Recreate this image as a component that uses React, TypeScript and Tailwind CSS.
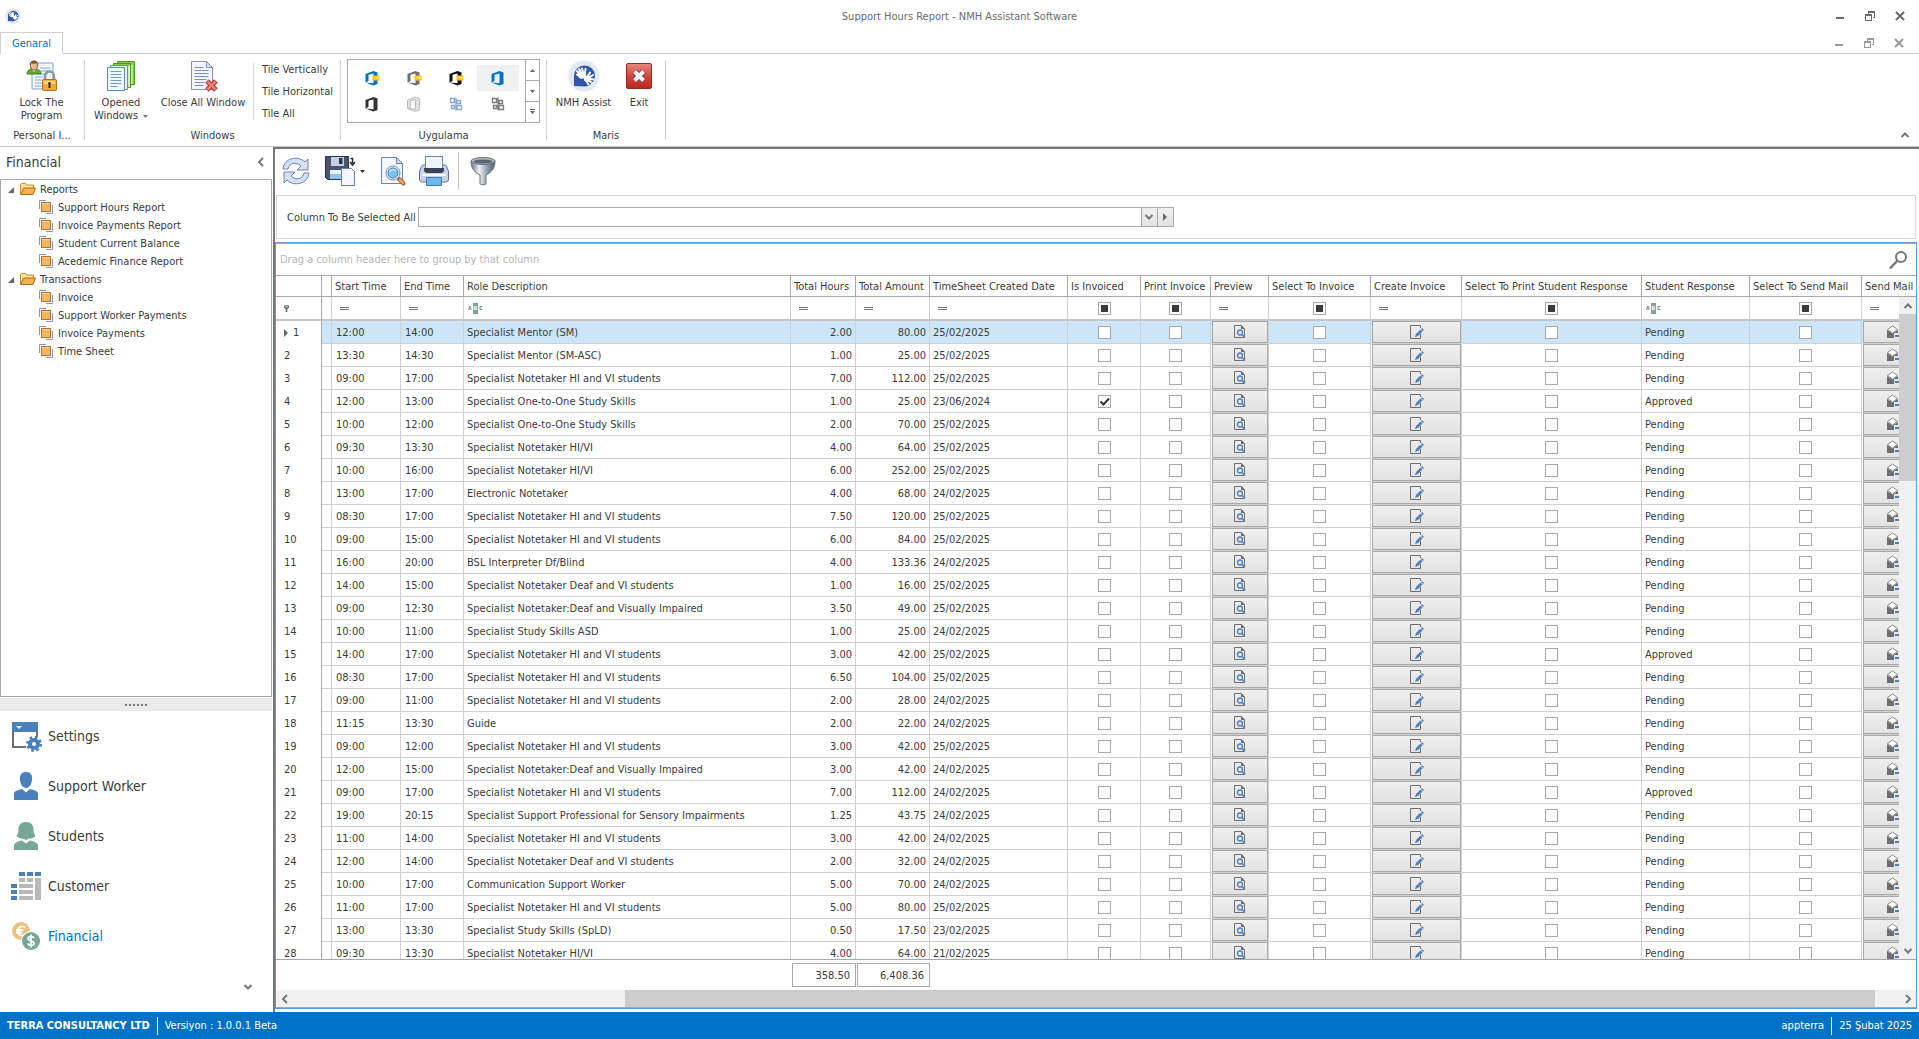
import { Fragment, type ReactNode } from 'react'

type Row = [string, string, string, string, string, string, string]

const N = 'Specialist Notetaker HI and VI students'

// start, end, role, hours, amount, created, response
const ROWS: Row[] = [
  ['12:00', '14:00', 'Specialist Mentor (SM)', '2.00', '80.00', '25/02/2025', 'Pending'],
  ['13:30', '14:30', 'Specialist Mentor (SM-ASC)', '1.00', '25.00', '25/02/2025', 'Pending'],
  ['09:00', '17:00', N, '7.00', '112.00', '25/02/2025', 'Pending'],
  ['12:00', '13:00', 'Specialist One-to-One Study Skills', '1.00', '25.00', '23/06/2024', 'Approved'],
  ['10:00', '12:00', 'Specialist One-to-One Study Skills', '2.00', '70.00', '25/02/2025', 'Pending'],
  ['09:30', '13:30', 'Specialist Notetaker HI/VI', '4.00', '64.00', '25/02/2025', 'Pending'],
  ['10:00', '16:00', 'Specialist Notetaker HI/VI', '6.00', '252.00', '25/02/2025', 'Pending'],
  ['13:00', '17:00', 'Electronic Notetaker', '4.00', '68.00', '24/02/2025', 'Pending'],
  ['08:30', '17:00', N, '7.50', '120.00', '25/02/2025', 'Pending'],
  ['09:00', '15:00', N, '6.00', '84.00', '25/02/2025', 'Pending'],
  ['16:00', '20:00', 'BSL Interpreter Df/Blind', '4.00', '133.36', '24/02/2025', 'Pending'],
  ['14:00', '15:00', 'Specialist Notetaker Deaf and VI students', '1.00', '16.00', '25/02/2025', 'Pending'],
  ['09:00', '12:30', 'Specialist Notetaker:Deaf and Visually Impaired', '3.50', '49.00', '25/02/2025', 'Pending'],
  ['10:00', '11:00', 'Specialist Study Skills ASD', '1.00', '25.00', '24/02/2025', 'Pending'],
  ['14:00', '17:00', N, '3.00', '42.00', '25/02/2025', 'Approved'],
  ['08:30', '17:00', N, '6.50', '104.00', '25/02/2025', 'Pending'],
  ['09:00', '11:00', N, '2.00', '28.00', '24/02/2025', 'Pending'],
  ['11:15', '13:30', 'Guide', '2.00', '22.00', '24/02/2025', 'Pending'],
  ['09:00', '12:00', N, '3.00', '42.00', '25/02/2025', 'Pending'],
  ['12:00', '15:00', 'Specialist Notetaker:Deaf and Visually Impaired', '3.00', '42.00', '24/02/2025', 'Pending'],
  ['09:00', '17:00', N, '7.00', '112.00', '24/02/2025', 'Approved'],
  ['19:00', '20:15', 'Specialist Support Professional for Sensory Impairments', '1.25', '43.75', '24/02/2025', 'Pending'],
  ['11:00', '14:00', N, '3.00', '42.00', '24/02/2025', 'Pending'],
  ['12:00', '14:00', 'Specialist Notetaker Deaf and VI students', '2.00', '32.00', '24/02/2025', 'Pending'],
  ['10:00', '17:00', 'Communication Support Worker', '5.00', '70.00', '24/02/2025', 'Pending'],
  ['11:00', '17:00', N, '5.00', '80.00', '25/02/2025', 'Pending'],
  ['13:00', '13:30', 'Specialist Study Skills (SpLD)', '0.50', '17.50', '23/02/2025', 'Pending'],
  ['09:30', '13:30', 'Specialist Notetaker HI/VI', '4.00', '64.00', '21/02/2025', 'Pending'],
]

const HEADERS = [
  'Start Time',
  'End Time',
  'Role Description',
  'Total Hours',
  'Total Amount',
  'TimeSheet Created Date',
  'Is Invoiced',
  'Print Invoice',
  'Preview',
  'Select To Invoice',
  'Create Invoice',
  'Select To Print Student Response',
  'Student Response',
  'Select To Send Mail',
  'Send Mail',
]

const FILTERS = ['eq', 'eq', 'abc', 'eq', 'eq', 'eq', 'box', 'box', 'eq', 'box', 'eq', 'box', 'abc', 'box', 'eq']

const TREE = [
  {
    title: 'Reports',
    items: ['Support Hours Report', 'Invoice Payments Report', 'Student Current Balance', 'Acedemic Finance Report'],
  },
  {
    title: 'Transactions',
    items: ['Invoice', 'Support Worker Payments', 'Invoice Payments', 'Time Sheet'],
  },
]

/* ---------- small glyphs ---------- */

function Chevron({ d, className = 'text-[#777]' }: { d: 'up' | 'down' | 'left' | 'right'; className?: string }) {
  const paths = {
    up: 'M1.500 7L5 3.500 8.500 7',
    down: 'M1.500 3L5 6.500 8.500 3',
    left: 'M7 1L3 5l4 4',
    right: 'M3 1l4 4-4 4',
  }
  return (
    <svg viewBox="0 0 10 10" className={`h-[10px] w-[10px] ${className}`} fill="none" stroke="currentColor" strokeWidth="2">
      <path d={paths[d]} />
    </svg>
  )
}

function RestoreGlyph() {
  return (
    <svg viewBox="0 0 10 10" className="h-[10px] w-[10px]" shapeRendering="crispEdges" fill="currentColor">
      <path d="M3 0h7v7H8V6h1V2H4v1H3z" />
      <path d="M0 3h7v7H0zM1 5v4h5V5z" fillRule="evenodd" />
    </svg>
  )
}

function WindowButtons({ className }: { className: string }) {
  return (
    <div className={`flex items-center ${className}`}>
      <button aria-label="Minimize" className="flex h-4 w-[30px] items-center justify-center">
        <svg viewBox="0 0 10 10" className="h-[10px] w-[10px]" fill="currentColor">
          <path d="M1 6h8v2H1z" />
        </svg>
      </button>
      <button aria-label="Restore" className="flex h-4 w-[30px] items-center justify-center">
        <RestoreGlyph />
      </button>
      <button aria-label="Close" className="flex h-4 w-[30px] items-center justify-center">
        <svg viewBox="0 0 10 10" className="h-[10px] w-[10px]" fill="none" stroke="currentColor" strokeWidth="2">
          <path d="M1 1l8 8M9 1L1 9" />
        </svg>
      </button>
    </div>
  )
}

function HandLogo({ className }: { className: string }) {
  return (
    <svg viewBox="0 0 32 32" className={className}>
      <circle cx="16" cy="16" r="15.5" fill="#e3e9ec" />
      <path d="M6 26V16a10.500 10.500 0 1 1 10.500 10.500z" fill="#2f56a8" />
      <g stroke="#fff" strokeLinecap="round" strokeWidth="2">
        <path d="M11.500 14L9 11M13 12.500L11 9M15 12l-1-3.500M17 13l.5-4M11 16l-2-1.500" />
        <path d="M20 16l2-3.500M22 17l3-2M22.500 19l3 .5M21.500 21l2.500 2M19 22l1.500 2.500" />
      </g>
      <path d="M10.500 16c0-3 3-5 6-3.500 1.500.5 2 2 1.500 3.500 2-1 4.500 0 5 2.500.3 3-2.500 4.500-5 3.500-2-1-2.500-2.500-2-4-2.500 1.500-5.500.5-5.500-2z" fill="#fff" />
    </svg>
  )
}

/* ---------- ribbon icons ---------- */

function LockIcon() {
  return (
    <svg viewBox="0 0 32 32" className="h-8 w-8">
      <path d="M6 3h21v26H6z" fill="#eef5fd" stroke="#7da3d3" />
      <path d="M14 8h10M14 11h10M14 14h8M9 17h8M9 20h7M9 23h7M9 26h7" stroke="#8fb0db" />
      <path d="M1 14c0-4 3-5 6.500-5s7.500 1 7.500 5z" fill="#66a832" stroke="#3f7c1c" />
      <path d="M6 9l2 3 2-3z" fill="#fff" />
      <ellipse cx="8" cy="5.500" rx="3.500" ry="4.500" fill="#e8b98b" stroke="#8a5a32" />
      <path d="M3.500 6c-.5-7 9-7 9 0l-1.500-3c-2 1-4 1-6 0z" fill="#7c4c25" />
      <path d="M19 20v-4c0-6 9-6 9 0v4" fill="none" stroke="#8e97a3" strokeWidth="2.500" />
      <rect x="16.500" y="19.500" width="14" height="11" rx="1" fill="#f6a93a" stroke="#b8701b" />
      <path d="M18 21h11v3H18z" fill="#fcd48a" />
      <path d="M23.500 22a1.500 1.500 0 0 1 1 2.500V28h-2v-3.500a1.500 1.500 0 0 1 1-2.500z" fill="#3a2a18" />
    </svg>
  )
}

function OpenedIcon() {
  return (
    <svg viewBox="0 0 32 32" className="h-8 w-8">
      <path d="M12.500 1.500h17v23h-17z" fill="#8ccc4a" stroke="#4a9a22" />
      <path d="M26.500 5v19" stroke="#cfeeb0" strokeWidth="2" />
      <path d="M8.500 3.500h17v24h-17z" fill="#d8efc4" stroke="#4a9a22" />
      <path d="M9 4h16v2H9z" fill="#8ccc4a" />
      <path d="M5.500 5.500h17v24h-17z" fill="#e5f1fb" stroke="#5b9a70" />
      <path d="M2.500 7.500h17v23h-17z" fill="#f2f8ff" stroke="#5b86c0" />
      <path d="M5.500 11.500h11M5.500 14.500h11M5.500 17.500h11M5.500 20.500h11M5.500 23.500h11M5.500 26.500h7" stroke="#6f9bd6" />
    </svg>
  )
}

function CloseAllIcon() {
  return (
    <svg viewBox="0 0 32 32" className="h-8 w-8">
      <path d="M4.500 1.500h15l6 6v22h-21z" fill="#f4f8fe" stroke="#7e92bd" />
      <path d="M19.500 1.500v6h6z" fill="#d4e2f4" stroke="#7e92bd" />
      <path d="M7.500 7.500h9M7.500 10.500h14M7.500 13.500h14M7.500 16.500h14M7.500 19.500h12M7.500 22.500h10M7.500 25.500h9" stroke="#7b8fc0" />
      <path d="M20 21l9 9M29 21l-9 9" stroke="#b5382c" strokeWidth="5" />
      <path d="M20.500 21.500l8 8M28.500 21.500l-8 8" stroke="#e88074" strokeWidth="2.500" />
    </svg>
  )
}

function ExitIcon() {
  return (
    <svg viewBox="0 0 32 32" className="h-8 w-8">
      <defs>
        <linearGradient id="exit" x1="0" y1="0" x2="0" y2="1">
          <stop offset="0" stopColor="#e88b80" />
          <stop offset=".5" stopColor="#d2463a" />
          <stop offset="1" stopColor="#b8281e" />
        </linearGradient>
      </defs>
      <rect x="3.500" y="3.500" width="25" height="25" rx="1.500" fill="url(#exit)" stroke="#9c2a22" />
      <path d="M11.500 11.500l9 9M20.500 11.500l-9 9" stroke="#8d3a3a" strokeWidth="6" />
      <path d="M11.500 11.500l9 9M20.500 11.500l-9 9" stroke="#f0f3f8" strokeWidth="4" />
    </svg>
  )
}

function OfficeIcon({ color, badge, outline }: { color: string; badge?: boolean; outline?: boolean }) {
  return (
    <svg viewBox="0 0 16 16" className="h-4 w-4 overflow-visible">
      <path
        d="M1.500 4L9.500 1l4 1.500v11.500l-4 1.500-8-3 8 .8V3.500L4.500 4.800v6.200l-3 1.500z"
        fill={outline ? '#e2e2e2' : color}
        stroke={outline ? color : 'none'}
      />
      {badge && (
        <g>
          <path d="M8.500 5.500h7v5h-7z" fill="#ffc40c" />
          <path d="M11 7.500h3V9" fill="none" stroke="#fff2c0" />
        </g>
      )}
    </svg>
  )
}

function BlocksIcon({ color }: { color: string }) {
  return (
    <svg viewBox="0 0 16 16" className="h-4 w-4" fill="none" stroke={color} strokeWidth="1.300">
      <path d="M2.500 2.500h4v4h-4zM9 4.500h3.500v3H9zM3.500 9.500h3v3h-3zM9 9.500h4.500v4H9zM8 1.500v13" />
    </svg>
  )
}

/* ---------- toolbar icons ---------- */

function RefreshIcon() {
  return (
    <svg viewBox="0 0 32 32" className="h-8 w-8" fill="#d5e1f2" stroke="#6f83ae">
      <path d="M3 14C4 3 18 0 25 7l3-3v11H17l4-4c-5-5-12-3-13 3z" />
      <path d="M29 18c-1 11-15 14-22 7l-3 3V17h11l-4 4c5 5 12 3 13-3z" />
    </svg>
  )
}

function SaveIcon() {
  return (
    <svg viewBox="0 0 32 32" className="h-8 w-8">
      <path d="M1.500 1.500h23v23h-21l-2-2z" fill="#49546e" stroke="#2c3550" />
      <path d="M7 2h13v9H7z" fill="#c6cfdf" />
      <path d="M15 3h3.500v6H15z" fill="#2c3550" />
      <path d="M6 15h14v9H6z" fill="#e9f1fb" />
      <path d="M6 19h12v5H6z" fill="#8cc4ee" />
      <path d="M25 2v11h7V2z" fill="#fff" />
      <path d="M26.500 3.500h2v5M26 7l2.500 3L31 7" fill="none" stroke="#23283a" strokeWidth="1.500" />
      <path d="M17.500 13.500h10l3 3v14h-13z" fill="#f4f8fe" stroke="#6f83ae" />
    </svg>
  )
}

function PreviewIcon() {
  return (
    <svg viewBox="0 0 32 32" className="h-8 w-8">
      <path d="M4.500 2.500h15l6 6v20h-21z" fill="#f2f7fd" stroke="#6f83ae" />
      <path d="M19.500 2.500v6h6z" fill="#cfdcef" stroke="#6f83ae" />
      <path d="M22 24l4.500 4.500" stroke="#b5602a" strokeWidth="4" strokeLinecap="round" />
      <path d="M23 25l3 3" stroke="#f5b56a" strokeWidth="2" strokeLinecap="round" />
      <circle cx="16" cy="18" r="7" fill="#e6eef8" stroke="#7c8cab" />
      <circle cx="16" cy="18" r="5" fill="#7ec3f3" stroke="#3d7fc0" />
      <path d="M12.500 17c1-3 5-3 6-1" fill="none" stroke="#d8f0ff" strokeWidth="1.500" />
    </svg>
  )
}

function PrintIcon() {
  return (
    <svg viewBox="0 0 32 32" className="h-8 w-8">
      <path d="M3 13c0-2 1-3 3-3h20c2 0 3 1 3 3l1.500 3v8c0 2-1 3-3 3h-23c-2 0-3-1-3-3v-8z" fill="#c9d3e6" stroke="#5e6f96" />
      <path d="M7.500 1.500h17v15h-17z" fill="#eff5fd" stroke="#6f83ae" />
      <path d="M6 13h20v3l-2 2H8l-2-2z" fill="#3a4258" />
      <path d="M4 19h24v2H4z" fill="#f6f9fe" />
      <path d="M8.500 22.500h15v8h-15z" fill="#6fb7ec" stroke="#4a76b0" />
    </svg>
  )
}

function FunnelIcon() {
  return (
    <svg viewBox="0 0 32 32" className="h-8 w-8">
      <defs>
        <linearGradient id="funnel" x1="0" x2="1">
          <stop offset="0" stopColor="#6b7585" />
          <stop offset=".35" stopColor="#eef1f5" />
          <stop offset=".7" stopColor="#8c95a3" />
          <stop offset="1" stopColor="#59606d" />
        </linearGradient>
      </defs>
      <path d="M4 6c0 7 3 11 9 14v9c1.500 1 4.500 1 6 0v-9c6-3 9-7 9-14z" fill="url(#funnel)" stroke="#6a7280" />
      <ellipse cx="16" cy="6" rx="12" ry="3.500" fill="#aeb7c4" stroke="#6a7280" />
      <ellipse cx="16" cy="6.500" rx="9.500" ry="2" fill="#5c6575" />
    </svg>
  )
}

/* ---------- sidebar icons ---------- */

function FolderIcon() {
  return (
    <svg viewBox="0 0 16 14" className="h-[14px] w-4">
      <path d="M.5 12.500v-10l1-1h4l1.500 1.500h6.500v3" fill="#fbe2a0" stroke="#c8892a" />
      <path d="M.8 12.500L3.500 6h12l-2.500 6.500z" fill="#f3b24e" stroke="#b06a1d" />
    </svg>
  )
}

function FormIcon() {
  return (
    <svg viewBox="0 0 14 14" className="h-[14px] w-[14px]" fill="none">
      <path d="M.5 9V.5H7M7 13.500h6.500V5" stroke="#8796c6" />
      <rect x="2.500" y="2.500" width="9" height="9" fill="#f0b860" stroke="#b8712e" />
      <path d="M3 3.500h8" stroke="#f8d596" />
    </svg>
  )
}

function SettingsIcon() {
  return (
    <svg viewBox="0 0 32 32" className="h-8 w-8">
      <path d="M2 2h26v10H2z" fill="#4a80bd" />
      <path d="M6 6h6l-3 3z" fill="#fff" />
      <path d="M3 12v15h13M27 12v5" fill="none" stroke="#6e6e6e" strokeWidth="2" />
      <circle cx="24" cy="24" r="4" fill="none" stroke="#4a80bd" strokeWidth="4" />
      <circle cx="24" cy="24" r="6.500" fill="none" stroke="#4a80bd" strokeWidth="3" strokeDasharray="2.550 2.550" />
    </svg>
  )
}

function ManIcon() {
  return (
    <svg viewBox="0 0 32 32" className="h-8 w-8" fill="#4a80bd">
      <path d="M16 2c5 0 6.500 3 6 8-.5 5-3 8-6 8s-5.500-3-6-8c-.5-5 1-8 6-8z" />
      <path d="M4 30v-6c0-3 4-4 8-5l4 3.500 4-3.500c4 1 8 2 8 5v6z" />
    </svg>
  )
}

function WomanIcon() {
  return (
    <svg viewBox="0 0 32 32" className="h-8 w-8" fill="#78a795">
      <path d="M16 2c5 0 7.500 3 7.500 7 0 3 .5 5 2 7-2 2-4 2.500-6 2.500L16 20l-3.500-1.500c-2 0-4-.5-6-2.500 1.500-2 2-4 2-7 0-4 2.500-7 7.500-7z" />
      <path d="M4 30v-4c0-3 4-5 8-5.500l4 3 4-3c4 .5 8 2.500 8 5.500v4z" />
    </svg>
  )
}

function CustomerIcon() {
  return (
    <svg viewBox="0 0 32 32" className="h-8 w-8" shapeRendering="crispEdges">
      <path d="M9 2h6v4H9zM17 2h6v4h-6zM25 2h6v4h-6zM1 14h6v4H1zM1 20h6v4H1zM1 26h6v4H1z" fill="#4a80bd" />
      <path d="M9 8h6v4H9zM17 8h6v4h-6zM25 8h6v22h-6zM9 14h14v4H9zM9 20h14v4H9zM9 26h14v4H9z" fill="#b9b9b9" />
    </svg>
  )
}

function FinancialIcon() {
  return (
    <svg viewBox="0 0 32 32" className="h-8 w-8" fill="none">
      <circle cx="11" cy="11" r="9" fill="#ecc17f" />
      <path d="M15 7.500c-3-2.500-7-.5-7 3.500s4 6 7 3.500M6 10h7M6 12.500h6" stroke="#fff" strokeWidth="1.800" />
      <circle cx="21" cy="21" r="10" fill="#fff" />
      <circle cx="21" cy="21" r="9" fill="#78a795" />
      <path d="M24 18c-1-2-6-2-6 .5s6 2 6 4.800-5 2.700-6.300.2M21 14.500v13" stroke="#fff" strokeWidth="1.800" />
    </svg>
  )
}

const NAV: { label: string; icon: ReactNode }[] = [
  { label: 'Settings', icon: <SettingsIcon /> },
  { label: 'Support Worker', icon: <ManIcon /> },
  { label: 'Students', icon: <WomanIcon /> },
  { label: 'Customer', icon: <CustomerIcon /> },
  { label: 'Financial', icon: <FinancialIcon /> },
]

/* ---------- grid pieces ---------- */

function PageSearchIcon() {
  return (
    <svg viewBox="0 0 12 14" className="h-[14px] w-3" fill="none">
      <path d="M10.500 12.500H.5V.5h7l3 3.500v7" stroke="#6e6e6e" />
      <path d="M7 0v4h4z" fill="#6e6e6e" />
      <circle cx="6" cy="7.500" r="2.500" stroke="#4a80bd" strokeWidth="1.300" />
      <path d="M8 9.500l3 3" stroke="#4a80bd" strokeWidth="1.600" />
    </svg>
  )
}

function PageEditIcon() {
  return (
    <svg viewBox="0 0 14 14" className="h-[14px] w-[14px]" fill="none">
      <path d="M10.500 3V.5H.5v13h10V9" stroke="#6e6e6e" />
      <path d="M5 12l1-3 4.500-4.500 2 2L8 11z" fill="#4a80bd" />
      <path d="M11 4l1-1 2 2-1 1z" fill="#4a80bd" />
    </svg>
  )
}

function MailIcon() {
  return (
    <svg viewBox="0 0 16 14" className="h-[14px] w-4" fill="none">
      <path d="M1 5l5.500 3.500L12 5v3H8v5H1z" fill="#6e6e6e" />
      <path d="M1.500 4.500L6.500 1l5 3.500-5 3.500z" fill="#fff" stroke="#8a8a8a" />
      <path d="M9 11h6" stroke="#4a80bd" strokeWidth="2" />
    </svg>
  )
}

function Tick({ label, checked, mixed }: { label: string; checked?: boolean; mixed?: boolean }) {
  return (
    <span className="relative mx-auto block h-[13px] w-[13px]">
      <input
        type="checkbox"
        aria-label={label}
        defaultChecked={checked}
        className="block h-[13px] w-[13px] appearance-none border border-[#a8a8a8] bg-white"
      />
      {checked && (
        <svg viewBox="0 0 13 13" className="pointer-events-none absolute inset-0" fill="none" stroke="#333" strokeWidth="2">
          <path d="M2.500 6.500l3 3 5.500-6" />
        </svg>
      )}
      {mixed && <span className="pointer-events-none absolute inset-[3px] bg-[#3a3a3a]" />}
    </span>
  )
}

function CellButton({ label, children, className = '' }: { label: string; children: ReactNode; className?: string }) {
  return (
    <button
      aria-label={label}
      className={`ml-px flex h-[22px] items-center justify-center border border-[#a8a8a8] bg-linear-to-b from-[#efefef] to-[#e2e2e2] ${className}`}
    >
      {children}
    </button>
  )
}

function Columns() {
  return (
    <colgroup>
      <col className="w-[46px]" />
      <col className="w-[10px]" />
      <col className="w-[69px]" />
      <col className="w-[63px]" />
      <col />
      <col className="w-[65px]" />
      <col className="w-[74px]" />
      <col className="w-[138px]" />
      <col className="w-[73px]" />
      <col className="w-[70px]" />
      <col className="w-[58px]" />
      <col className="w-[102px]" />
      <col className="w-[91px]" />
      <col className="w-[180px]" />
      <col className="w-[108px]" />
      <col className="w-[112px]" />
      <col className="w-[54px]" />
    </colgroup>
  )
}

function FilterMark({ kind, label }: { kind: string; label: string }) {
  if (kind === 'box') return <Tick label={`Filter ${label}`} mixed />
  if (kind === 'abc')
    return (
      <span className="flex items-center gap-px font-['Liberation_Mono',monospace] text-[6px] leading-[11px] font-bold text-[#6e6e6e]">
        A<span className="bg-[#78a795] px-px text-white">B</span>C
      </span>
    )
  return (
    <svg viewBox="0 0 9 3" className="ml-1 h-[3px] w-[9px]" shapeRendering="crispEdges">
      <path d="M0 0h9v1H0zM0 2h9v1H0z" fill="#777" />
    </svg>
  )
}

const td = 'h-[23px] border-r border-b border-[#d0d0d0] p-0'

function DataGrid() {
  return (
    <div className="relative min-h-0 flex-1 overflow-hidden border-b border-[#a8a8a8]">
      <table className="w-full table-fixed border-separate border-spacing-0 text-left whitespace-nowrap">
        <Columns />
        <thead>
          <tr>
            <th className="h-[21px] border-r border-b border-[#a8a8a8] p-0" />
            <th className="border-r border-b border-[#a8a8a8] p-0" />
            {HEADERS.map((h, i) => (
              <th
                key={h}
                className={`border-b border-[#a8a8a8] p-0 pl-[3px] font-normal ${i < HEADERS.length - 1 ? 'border-r' : ''}`}
              >
                {h}
              </th>
            ))}
          </tr>
          <tr>
            <td className="h-6 border-r border-b-2 border-[#a8a8a8] border-b-[#c6c6c6] p-0">
              <svg viewBox="0 0 5 7" className="ml-2 h-[7px] w-[5px]" fill="#666">
                <path d="M0 1c0-1 5-1 5 0v1.500L3.300 4v3H1.700V4L0 2.500z" />
                <path d="M1.500 1.200h2v1h-2z" fill="#fff" />
              </svg>
            </td>
            <td className="border-r border-b-2 border-[#d0d0d0] border-b-[#c6c6c6] p-0" />
            {FILTERS.map((f, i) => (
              <td key={HEADERS[i]} className="border-r border-b-2 border-[#d0d0d0] border-b-[#c6c6c6] p-0 px-1">
                <FilterMark kind={f} label={HEADERS[i]} />
              </td>
            ))}
          </tr>
        </thead>
        <tbody>
          {ROWS.map(([start, end, role, hours, amount, created, response], i) => (
            <tr key={i} className={i === 0 ? 'bg-[#cde6f7]' : ''}>
              <td className="h-[23px] border-r border-[#a8a8a8] bg-white p-0">
                <span className="flex items-center gap-[5px] pl-2">
                  {i === 0 && (
                    <svg viewBox="0 0 4 8" className="h-2 w-1" fill="#666">
                      <path d="M0 0l4 4-4 4z" />
                    </svg>
                  )}
                  {i + 1}
                </span>
              </td>
              <td className={td} />
              <td className={`${td} pl-1`}>{start}</td>
              <td className={`${td} pl-1`}>{end}</td>
              <td className={`${td} pl-[3px]`}>{role}</td>
              <td className={`${td} pr-[3px] text-right`}>{hours}</td>
              <td className={`${td} pr-[3px] text-right`}>{amount}</td>
              <td className={`${td} pl-[3px]`}>{created}</td>
              <td className={td}>
                <Tick label={`Is invoiced ${i + 1}`} checked={i === 3} />
              </td>
              <td className={td}>
                <Tick label={`Print invoice ${i + 1}`} />
              </td>
              <td className={td}>
                <CellButton label={`Preview ${i + 1}`} className="w-14">
                  <PageSearchIcon />
                </CellButton>
              </td>
              <td className={td}>
                <Tick label={`Select to invoice ${i + 1}`} />
              </td>
              <td className={td}>
                <CellButton label={`Create invoice ${i + 1}`} className="w-[89px]">
                  <PageEditIcon />
                </CellButton>
              </td>
              <td className={td}>
                <Tick label={`Select to print student response ${i + 1}`} />
              </td>
              <td className={`${td} pl-[3px]`}>{response}</td>
              <td className={td}>
                <Tick label={`Select to send mail ${i + 1}`} />
              </td>
              <td className={td}>
                <CellButton label={`Send mail ${i + 1}`} className="w-[62px]">
                  <MailIcon />
                </CellButton>
              </td>
            </tr>
          ))}
        </tbody>
      </table>

      {/* Vertical scrollbar, floats over the last column below the header */}
      <div className="absolute top-[21px] right-0 bottom-0 flex w-[17px] flex-col bg-[#f0f0f0]">
        <div className="flex h-[17px] items-center justify-center">
          <Chevron d="up" />
        </div>
        <div className="h-[167px] bg-[#cdcdcd]" />
        <div className="mt-auto flex h-[17px] items-center justify-center">
          <Chevron d="down" />
        </div>
      </div>
    </div>
  )
}

/* ---------- page sections ---------- */

function RibbonButton({ icon, lines, drop, className }: { icon: ReactNode; lines: string[]; drop?: boolean; className: string }) {
  return (
    <button className={`flex flex-col items-center ${className}`}>
      {icon}
      <span className="mt-1 block text-center whitespace-nowrap">
        {lines.map((l, i) => (
          <Fragment key={l}>
            {i > 0 && <br />}
            {l}
          </Fragment>
        ))}
        {drop && (
          <svg viewBox="0 0 5 3" className="ml-[5px] inline-block h-[3px] w-[5px] align-middle" fill="#777">
            <path d="M0 0h5L2.500 3z" />
          </svg>
        )}
      </span>
    </button>
  )
}

function RibbonGroup({ title, className, children }: { title: string; className: string; children: ReactNode }) {
  return (
    <section className={`my-[6px] flex flex-col border-r border-[#d5d5d5] ${className}`}>
      <div className="flex min-h-0 flex-1 items-start">{children}</div>
      <div className="text-center leading-[8px]">{title}</div>
    </section>
  )
}

function Ribbon() {
  return (
    <div className="flex h-[93px] shrink-0 border-b border-[#c6c6c6]">
      <RibbonGroup title="Personal I..." className="w-[85px]">
        <RibbonButton icon={<LockIcon />} lines={['Lock The', 'Program']} className="w-[83px]" />
      </RibbonGroup>
      <RibbonGroup title="Windows" className="w-64">
        <RibbonButton icon={<OpenedIcon />} lines={['Opened', 'Windows']} drop className="w-[72px]" />
        <RibbonButton icon={<CloseAllIcon />} lines={['Close All Window']} className="w-[92px]" />
        <div className="mt-[3px] ml-1 flex h-[57px] flex-col justify-between border-l border-[#d5d5d5] pl-2">
          <button className="text-left">Tile Vertically</button>
          <button className="text-left">Tile Horizontal</button>
          <button className="text-left">Tile All</button>
        </div>
      </RibbonGroup>
      <RibbonGroup title="Uygulama" className="w-[206px]">
        <div className="mx-[6px] -mt-px flex h-16 flex-1 border border-[#a8a8a8]">
          <div className="grid h-full flex-1 grid-cols-4 grid-rows-2 py-[5px] pr-[6px] pl-[3px]">
            {[
              <OfficeIcon color="#0072c6" badge />,
              <OfficeIcon color="#6e6e6e" badge />,
              <OfficeIcon color="#111" badge />,
              <OfficeIcon color="#0072c6" />,
              <OfficeIcon color="#333" />,
              <OfficeIcon color="#bdbdbd" outline />,
              <BlocksIcon color="#8aa8cf" />,
              <BlocksIcon color="#7a7a7a" />,
            ].map((icon, i) => (
              <button
                key={i}
                aria-label={`Skin ${i + 1}`}
                className={`flex items-center justify-center ${i === 3 ? 'bg-[#f0f0f0]' : ''}`}
              >
                {icon}
              </button>
            ))}
          </div>
          <div className="flex w-[14px] flex-col border-l border-[#a8a8a8]">
            {['M0 3h5L2.500 0z', 'M0 0h5L2.500 3z', 'M0-2h5v1H0zM0 0h5L2.500 3z'].map((d, i) => (
              <button
                key={d}
                aria-label={`Gallery scroll ${i + 1}`}
                className={`flex flex-1 items-center justify-center ${i > 0 ? 'border-t border-[#a8a8a8]' : ''}`}
              >
                <svg viewBox="0 0 5 3" className="h-[3px] w-[5px] overflow-visible" fill="#666">
                  <path d={d} />
                </svg>
              </button>
            ))}
          </div>
        </div>
      </RibbonGroup>
      <RibbonGroup title="Maris" className="w-[119px]">
        <RibbonButton icon={<HandLogo className="h-8 w-8" />} lines={['NMH Assist']} className="w-[73px]" />
        <RibbonButton icon={<ExitIcon />} lines={['Exit']} className="w-[38px]" />
      </RibbonGroup>
      <button aria-label="Collapse ribbon" className="mt-auto mr-[9px] mb-[6px] ml-auto">
        <Chevron d="up" />
      </button>
    </div>
  )
}

function Sidebar() {
  return (
    <aside className="flex w-[273px] shrink-0 flex-col">
      <div className="flex h-8 items-center justify-between pr-[7px] pb-[2px] pl-[6px]">
        <h2 className="text-sm">Financial</h2>
        <button aria-label="Collapse sidebar">
          <Chevron d="left" />
        </button>
      </div>
      <div className="mr-px min-h-0 flex-1 border border-[#a8a8a8]">
        {TREE.map((group) => (
          <Fragment key={group.title}>
            <div className="flex h-[18px] items-center pl-[7px]">
              <svg viewBox="0 0 6 6" className="mt-[2px] h-[6px] w-[6px]" fill="#666">
                <path d="M6 0v6H0z" />
              </svg>
              <span className="mr-1 ml-[6px]">
                <FolderIcon />
              </span>
              {group.title}
            </div>
            {group.items.map((item) => (
              <a key={item} href="#" className="flex h-[18px] items-center gap-[5px] pl-[38px]">
                <FormIcon />
                {item}
              </a>
            ))}
          </Fragment>
        ))}
      </div>
      <div className="mt-px mr-px flex h-[13px] items-center justify-center gap-px bg-[#ebebeb]">
        {[0, 1, 2, 3, 4, 5].map((n) => (
          <span key={n} className="mr-px h-[2px] w-[2px] bg-[#777]" />
        ))}
      </div>
      <nav>
        {NAV.map(({ label, icon }) => (
          <a
            key={label}
            href="#"
            className={`flex h-[50px] items-center gap-[6px] pl-[10px] text-sm ${label === 'Financial' ? 'text-[#0072c6]' : ''}`}
          >
            {icon}
            {label}
          </a>
        ))}
      </nav>
      <div className="flex h-[51px] items-center justify-end pr-5">
        <Chevron d="down" />
      </div>
    </aside>
  )
}

function Toolbar() {
  return (
    <div className="flex h-[46px] shrink-0 items-center pb-[2px] pl-[5px]">
      <button aria-label="Refresh">
        <RefreshIcon />
      </button>
      <button aria-label="Save" className="ml-3 flex items-center">
        <SaveIcon />
        <svg viewBox="0 0 5 3" className="ml-1 h-[3px] w-[5px]" fill="#333">
          <path d="M0 0h5L2.500 3z" />
        </svg>
      </button>
      <button aria-label="Print preview" className="ml-3">
        <PreviewIcon />
      </button>
      <button aria-label="Print" className="ml-[9px]">
        <PrintIcon />
      </button>
      <div className="ml-2 h-[38px] border-l border-[#c6c6c6]" />
      <button aria-label="Filter" className="ml-2">
        <FunnelIcon />
      </button>
    </div>
  )
}

function Workspace() {
  return (
    <main className="flex min-w-0 flex-1 flex-col border-t-2 border-l-2 border-[#777] pb-[3px]">
      <Toolbar />
      <div className="mr-[3px] ml-px flex h-[44px] shrink-0 items-center border border-[#d5d5d5] pl-[10px]">
        <label htmlFor="column-select" className="mr-[2px]">
          Column To Be Selected All
        </label>
        <div className="relative max-w-[740px] flex-1">
          <select id="column-select" className="block h-5 w-full appearance-none border border-[#a8a8a8] bg-white">
            <option value="" />
          </select>
          <span className="pointer-events-none absolute inset-y-0 right-0 flex w-[17px] items-center justify-center border border-[#a8a8a8] bg-linear-to-b from-[#efefef] to-[#e2e2e2]">
            <Chevron d="down" />
          </span>
        </div>
        <button
          aria-label="Apply"
          className="-ml-px flex h-5 w-[17px] items-center justify-center border border-[#a8a8a8] bg-linear-to-b from-[#efefef] to-[#e2e2e2]"
        >
          <svg viewBox="0 0 4 8" className="h-2 w-1" fill="#666">
            <path d="M0 0l4 4-4 4z" />
          </svg>
        </button>
      </div>

      <div className="mt-[3px] mr-[2px] flex min-h-0 flex-1 flex-col border border-[#5b9bdf]">
        <div className="flex h-[33px] shrink-0 items-center justify-between border-t border-b border-[#a8a8a8] pr-2 pl-1 text-[#b5b5b5]">
          Drag a column header here to group by that column
          <button aria-label="Search">
            <svg viewBox="0 0 20 20" className="h-5 w-5" fill="none" stroke="#777">
              <circle cx="13" cy="7" r="5" strokeWidth="2" />
              <path d="M9.500 10.500L2 18.500" strokeWidth="2.500" />
            </svg>
          </button>
        </div>
        <DataGrid />
        <div className="h-[30px] shrink-0 overflow-hidden pt-[3px]">
          <table className="w-full table-fixed border-separate border-spacing-0 text-right">
            <Columns />
            <tbody>
              <tr>
                <td colSpan={5} className="p-0" />
                <td className="p-0 pl-px">
                  <div className="h-6 border border-[#a8a8a8] pt-[5px] pr-[5px]">358.50</div>
                </td>
                <td className="p-0 pl-px">
                  <div className="h-6 border border-[#a8a8a8] pt-[5px] pr-[5px]">6,408.36</div>
                </td>
                <td colSpan={10} className="p-0" />
              </tr>
            </tbody>
          </table>
        </div>
        <div className="flex h-[18px] shrink-0 border-b border-[#a8a8a8] bg-[#f0f0f0]">
          <span className="flex w-[17px] items-center justify-center">
            <Chevron d="left" />
          </span>
          <div className="flex flex-1 justify-end pr-6">
            <div className="w-[79%] bg-[#cdcdcd]" />
          </div>
          <span className="flex w-[17px] items-center justify-center">
            <Chevron d="right" />
          </span>
        </div>
      </div>
    </main>
  )
}

export default function App() {
  return (
    <div className="flex h-screen flex-col overflow-hidden bg-white font-['DejaVu_Sans_Condensed','DejaVu_Sans',sans-serif] text-[11px] leading-[13px] text-[#3b3b3b]">
      <header className="grid h-8 shrink-0 grid-cols-[1fr_auto_1fr] items-center">
        <HandLogo className="ml-[5px] h-4 w-4" />
        <h1 className="text-[#6b6b6b]">Support Hours Report - NMH Assistant Software</h1>
        <WindowButtons className="mr-1 justify-self-end text-[#6b6b6b]" />
      </header>

      <div className="flex h-[22px] shrink-0">
        <button className="h-[22px] w-[63px] border-t border-r border-l border-[#d0d0d0] text-[#0072c6]">Genaral</button>
        <div className="flex flex-1 items-center justify-end border-b border-[#d0d0d0] pr-[5px] text-[#999]">
          <WindowButtons className="" />
        </div>
      </div>

      <Ribbon />

      <div className="flex min-h-0 flex-1">
        <Sidebar />
        <Workspace />
      </div>

      <footer className="flex h-[27px] shrink-0 items-center bg-[#0072c6] px-[7px] text-white">
        <strong>TERRA CONSULTANCY LTD</strong>
        <span className="mx-[7px] h-[18px] border-l border-white" />
        <span>Versiyon : 1.0.0.1 Beta</span>
        <span className="ml-auto">appterra</span>
        <span className="mx-[7px] h-[18px] border-l border-white" />
        <span>25 Şubat 2025</span>
      </footer>
    </div>
  )
}
